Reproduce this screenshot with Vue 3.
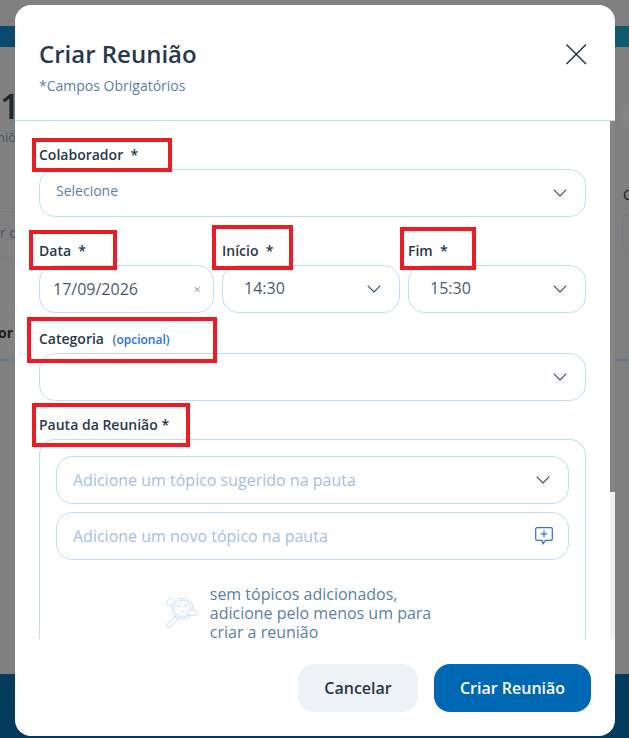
<script setup>
const timeFields = [
  { label: 'Início', value: '14:30', cls: 'field--start' },
  { label: 'Fim', value: '15:30', cls: 'field--end' }
];
</script>

<template>
  <div class="page">
    <div class="page__top"></div>
    <div class="page__band"></div>
    <div class="page__main">
      <div class="page__left">
        <div class="page__num">1</div>
        <div class="page__sub">niõ</div>
        <div class="page__rule page__rule--a"></div>
        <div class="page__frag">r c</div>
        <div class="page__rule page__rule--b"></div>
        <div class="page__bold">or</div>
        <div class="page__rule page__rule--c"></div>
      </div>
      <div class="page__right">
        <div class="page__circle"></div>
        <div class="page__letter">C</div>
        <div class="page__box"></div>
        <div class="page__rule page__rule--d"></div>
      </div>
    </div>
    <div class="page__footer"></div>
  </div>

  <div class="modal">
    <header class="modal__header">
      <div>
        <h1 class="modal__title">Criar Reunião</h1>
        <p class="modal__hint">*Campos Obrigatórios</p>
      </div>
      <svg class="modal__close" width="24" height="24" viewBox="0 0 24 24" fill="none" stroke="#2b3a4a" stroke-width="1.6">
        <path d="M2.500 2.500l19.500 19.500M22 2.500L2.500 22" />
      </svg>
    </header>

    <div class="modal__body">
      <div class="form">
        <div class="field">
          <span class="label mark mark--colab">Colaborador&nbsp; *</span>
          <div class="input input--select">
            <span class="input__placeholder">Selecione</span>
            <svg class="chev" width="14" height="8" viewBox="0 0 14 8" fill="none" stroke="#2b4a6a" stroke-width="1.1"><path d="M.7.7L7 7 13.300.7" /></svg>
          </div>
        </div>

        <div class="row">
          <div class="field field--date">
            <span class="label mark mark--data">Data&nbsp; *</span>
            <div class="input input--value">
              <span>17/09/2026</span>
              <span class="clear">×</span>
            </div>
          </div>
          <div v-for="t in timeFields" :key="t.label" class="field" :class="t.cls">
            <span class="label mark" :class="t.cls + '-mark'">{{ t.label }}&nbsp; *</span>
            <div class="input input--value input--time">
              <span class="input__time">{{ t.value }}</span>
              <svg class="chev" width="14" height="8" viewBox="0 0 14 8" fill="none" stroke="#2b4a6a" stroke-width="1.1"><path d="M.7.7L7 7 13.300.7" /></svg>
            </div>
          </div>
        </div>

        <div class="field field--cat">
          <span class="label mark mark--cat">Categoria <small class="optional">(opcional)</small></span>
          <div class="input input--select">
            <span></span>
            <svg class="chev" width="14" height="8" viewBox="0 0 14 8" fill="none" stroke="#2b4a6a" stroke-width="1.1"><path d="M.7.7L7 7 13.300.7" /></svg>
          </div>
        </div>

        <div class="field field--pauta">
          <span class="label mark mark--pauta">Pauta da Reunião *</span>
          <div class="agenda">
            <div class="input input--agenda">
              <span class="input__suggest">Adicione um tópico sugerido na pauta</span>
              <svg class="chev" width="14" height="8" viewBox="0 0 14 8" fill="none" stroke="#2b4a6a" stroke-width="1.1"><path d="M.7.7L7 7 13.300.7" /></svg>
            </div>
            <div class="input input--agenda input--icon">
              <span>Adicione um novo tópico na pauta</span>
              <svg width="18" height="18" viewBox="0 0 18 18" fill="none" stroke="#2f6fe0" stroke-width="1.2">
                <path d="M2 .7h14A1.300 1.300 0 0 1 17.300 2v10a1.300 1.300 0 0 1-1.300 1.300h-5.500L8 16.800l-1-3.500H2A1.300 1.300 0 0 1 .7 12V2A1.300 1.300 0 0 1 2 .7z" />
                <path d="M9 3.500v6.500M5.700 6.800h6.600" />
              </svg>
            </div>
            <div class="empty">
              <svg width="32" height="31" viewBox="0 0 32 31" fill="none" stroke="#c9def6" stroke-width="1">
                <circle cx="16.500" cy="10.500" r="10.500" />
                <circle cx="16.500" cy="10.500" r="8.500" />
                <path d="M9 18l-7.500 8a2 2 0 0 0 3 3l7.500-8M9 18l3 3" />
                <path d="M6.500 7H2.500a2.300 2.300 0 0 1-.5-4.500 3.200 3.200 0 0 1 6-1" fill="#fff" />
                <path d="M21 17a3 3 0 0 1 3-4.500 3.500 3.500 0 0 1 5 .5 2 2 0 0 1 2 4H21z" fill="#fff" />
                <path d="M11.500 7l2.500 2.500M14 7l-2.500 2.500M18.500 7L21 9.500M21 7l-2.500 2.500M13.500 15a4 4 0 0 1 5-1.500" />
              </svg>
              <p class="empty__text">sem tópicos adicionados,<br />adicione pelo menos um para<br />criar a reunião</p>
            </div>
          </div>
        </div>
      </div>
      <div class="scroll"><div class="scroll__thumb"></div></div>
    </div>

    <footer class="modal__footer">
      <button class="btn btn--ghost">Cancelar</button>
      <button class="btn btn--primary">Criar Reunião</button>
    </footer>
  </div>
</template>

<style>
html, body {
  margin: 0;
  height: 100%;
  overflow: hidden;
}
</style>

<style scoped>
.page {
  width: 629px;
  height: 738px;
  display: flex;
  flex-direction: column;
  background: #808080;
  font-family: "Open Sans", sans-serif;
  color: #1c1c1c;
  overflow: hidden;
}

.page__top { height: 26px; }
.page__band { height: 21px; background: linear-gradient(90deg, #0a4a6e, #0f5a6c); }
.page__main { flex: 1; display: flex; justify-content: space-between; }
.page__left { width: 15px; overflow: hidden; }
.page__right { width: 14px; overflow: hidden; }
.page__footer { height: 64px; background: #043a5c; }

.page__num { font-size: 35px; font-weight: 600; line-height: 40px; margin: 39px 0 0; color: #23272c; }
.page__sub { font-size: 13px; color: #4a5560; margin: 3px 0 0 -3px; line-height: 16px; white-space: nowrap; }
.page__rule { height: 1px; background: #6b7a8a; }
.page__rule--a { margin-top: 66px; }
.page__frag { font-size: 14px; color: #4a5560; white-space: nowrap; margin-top: 12px; line-height: 18px; }
.page__rule--b { margin-top: 16px; }
.page__bold { font-size: 14px; font-weight: 700; margin: 65px 0 0 -2px; line-height: 18px; }
.page__rule--c { margin-top: 17px; height: 2px; }
.page__circle { width: 40px; height: 42px; border-radius: 50%; background: #858585; margin: 48px 0 0 7px; }
.page__letter { font-size: 14px; margin: 49px 0 0 8px; line-height: 18px; }
.page__box { box-sizing: border-box; width: 40px; height: 43px; margin: 8px 0 0 7px; border: 1px solid #6b7a8a; border-radius: 10px; }
.page__rule--d { margin-top: 104px; height: 2px; }

.modal {
  position: absolute;
  left: 15px;
  top: 5px;
  width: 600px;
  height: 731px;
  display: flex;
  flex-direction: column;
  background: #fff;
  border-radius: 16px;
  overflow: hidden;
  font-family: "Open Sans", sans-serif;
  color: #27384a;
}

.modal__header {
  flex: none;
  height: 116px;
  box-sizing: border-box;
  display: flex;
  justify-content: space-between;
  padding: 34px 27px 0 24px;
  border-bottom: 1px solid #c5dcf0;
}

.modal__title { margin: 0; font-size: 24px; line-height: 30px; font-weight: 600; }
.modal__hint { margin: 7px 0 0; font-size: 14px; line-height: 19px; color: #5b7fa3; }
.modal__close { margin-top: 3px; }

.modal__body { flex: 1; display: flex; min-height: 0; overflow: hidden; }
.form { flex: 1; padding: 24px 24px 0; min-width: 0; }
.scroll { width: 5px; background: #f1f1f1; }
.scroll__thumb { height: 371px; background: #858585; }

.field { display: flex; flex-direction: column; }
.field--cat { margin-top: 16px; }
.field--pauta { margin-top: 14px; }
.label { font-size: 14px; font-weight: 600; line-height: 20px; }
.optional { font-size: 12px; line-height: 1; color: #2a6fe8; margin-left: 5px; font-weight: 600; }

.mark { position: relative; }
.mark::after {
  content: "";
  position: absolute;
  box-sizing: border-box;
  border: 4px solid #ed1c24;
  pointer-events: none;
}
.mark--colab::after { left: -7px; top: -7px; width: 140px; height: 34px; }
.mark--data::after { left: -10px; top: -11px; width: 88px; height: 40px; }
.field--start-mark::after { left: -10px; top: -16px; width: 81px; height: 45px; }
.field--end-mark::after { left: -8px; top: -14px; width: 76px; height: 43px; }
.mark--cat::after { left: -12px; top: -12px; width: 190px; height: 46px; }
.mark--pauta::after { left: -7px; top: -12px; width: 158px; height: 44px; }

.row { display: flex; gap: 8px; margin-top: 24px; }
.field--date { width: 175px; }
.field--start { width: 178px; }
.field--end { width: 178px; }

.input {
  box-sizing: border-box;
  display: flex;
  align-items: center;
  justify-content: space-between;
  border: 1px solid #c5dcf0;
  border-radius: 16px;
  height: 48px;
  margin-top: 4px;
  padding: 0 18px 0 16px;
  font-size: 14px;
}

.input__placeholder { color: #5b7fa3; margin-top: -5px; }
.input--value { font-size: 16px; color: #4a5a6c; padding-left: 13px; }
.input--time { padding-left: 21px; }
.input__time { margin-top: -2px; }
.input__suggest { margin-top: -1px; }
.clear { color: #9aa5b0; font-size: 13px; margin-right: -6px; }

.agenda {
  border: 1px solid #c5dcf0;
  border-bottom: 0;
  border-radius: 16px 16px 0 0;
  margin-top: 4px;
  padding: 16px 16px 0;
  height: 200px;
  box-sizing: border-box;
}

.input--agenda { font-size: 16px; color: #a6bedd; margin-top: 0; margin-bottom: 8px; }
.input--icon { padding-right: 15px; }

.empty { display: flex; justify-content: center; align-items: center; gap: 12px; margin-top: 25px; padding-right: 28px; }
.empty__text { margin: 0; font-size: 16px; line-height: 19px; color: #5b7fa3; }

.modal__footer {
  flex: none;
  height: 97px;
  box-sizing: border-box;
  display: flex;
  justify-content: flex-end;
  gap: 16px;
  padding: 25px 24px 0;
}

.btn {
  border: 0;
  border-radius: 16px;
  height: 48px;
  font-family: inherit;
  font-size: 16px;
  font-weight: 600;
}
.btn--ghost { width: 120px; background: #eef1f5; color: #27384a; }
.btn--primary { width: 157px; background: #0068b3; color: #fff; }
</style>
